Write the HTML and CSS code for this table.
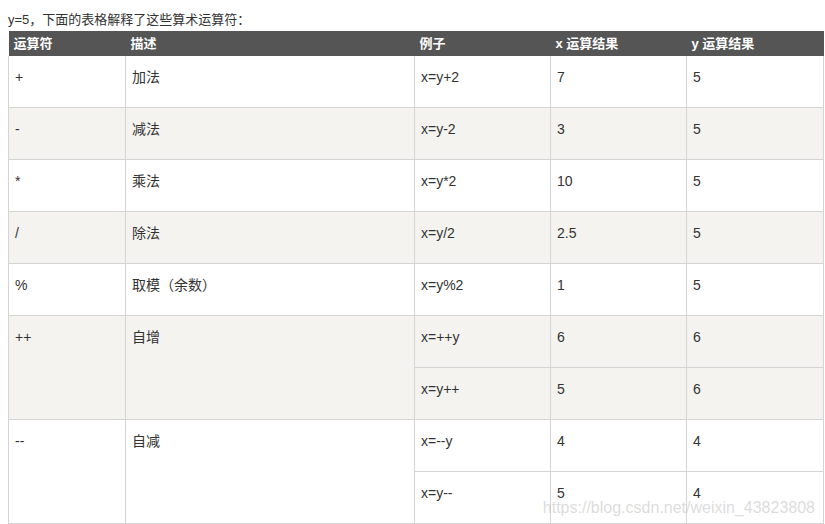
FILE: index.html
```html
<!DOCTYPE html>
<html lang="zh">
<head>
<meta charset="utf-8">
<title>算术运算符</title>
<link rel="stylesheet" href="styles.css">
</head>
<body>
<p class="intro">y=5，下面的表格解释了这些算术运算符：</p>
<div class="wrap">
<table class="ops">
  <colgroup>
    <col class="c1"><col class="c2"><col class="c3"><col class="c4"><col class="c5">
  </colgroup>
  <thead>
    <tr><th>运算符</th><th>描述</th><th>例子</th><th>x 运算结果</th><th>y 运算结果</th></tr>
  </thead>
  <tbody>
    <tr class="first"><td>+</td><td>加法</td><td>x=y+2</td><td>7</td><td>5</td></tr>
    <tr class="alt"><td>-</td><td>减法</td><td>x=y-2</td><td>3</td><td>5</td></tr>
    <tr><td>*</td><td>乘法</td><td>x=y*2</td><td>10</td><td>5</td></tr>
    <tr class="alt"><td>/</td><td>除法</td><td>x=y/2</td><td>2.5</td><td>5</td></tr>
    <tr><td>%</td><td>取模（余数）</td><td>x=y%2</td><td>1</td><td>5</td></tr>
    <tr class="alt"><td rowspan="2">++</td><td rowspan="2">自增</td><td>x=++y</td><td>6</td><td>6</td></tr>
    <tr class="alt"><td>x=y++</td><td>5</td><td>6</td></tr>
    <tr><td rowspan="2">--</td><td rowspan="2">自减</td><td>x=--y</td><td>4</td><td>4</td></tr>
    <tr><td>x=y--</td><td>5</td><td>4</td></tr>
  </tbody>
</table>
<span class="watermark">https://blog.csdn.net/weixin_43823808</span>
</div>
</body>
</html>
```
FILE: styles.css
```css
html, body {
  margin: 0;
  padding: 0;
  background: #fff;
}
body {
  padding: 0 8px;
  font-family: "Liberation Sans", Arial, "Noto Sans CJK SC", sans-serif;
  color: #333;
}
.intro {
  margin: 0;
  font-size: 13px;
  line-height: 23px;
  padding-top: 8px;
  color: #333;
}
.wrap {
  position: relative;
  width: 815px;
}
.ops {
  width: 815px;
  border-collapse: collapse;
  table-layout: fixed;
  font-size: 14px;
}
.c1 { width: 117px; }
.c2 { width: 289px; }
.c3 { width: 136px; }
.c4 { width: 136px; }
.c5 { width: 137px; }
.ops th {
  background: #555555;
  color: #fff;
  font-size: 13px;
  font-weight: bold;
  text-align: left;
  height: 25px;
  padding: 0 5px;
  line-height: 25px;
  border: 0;
  box-sizing: border-box;
}
.ops td {
  border: 1px solid #d4d4d4;
  padding: 12px 6px 21px;
  line-height: 18px;
  vertical-align: top;
  background: #fff;
}
.ops tr.first td {
  border-top: 0;
}
.ops tr.alt td {
  background: #f4f3f0;
}
.watermark {
  position: absolute;
  right: 8px;
  bottom: 7px;
  font-size: 16px;
  color: rgba(190, 190, 190, 0.55);
  font-family: "Liberation Sans", Arial, sans-serif;
  pointer-events: none;
}
```
